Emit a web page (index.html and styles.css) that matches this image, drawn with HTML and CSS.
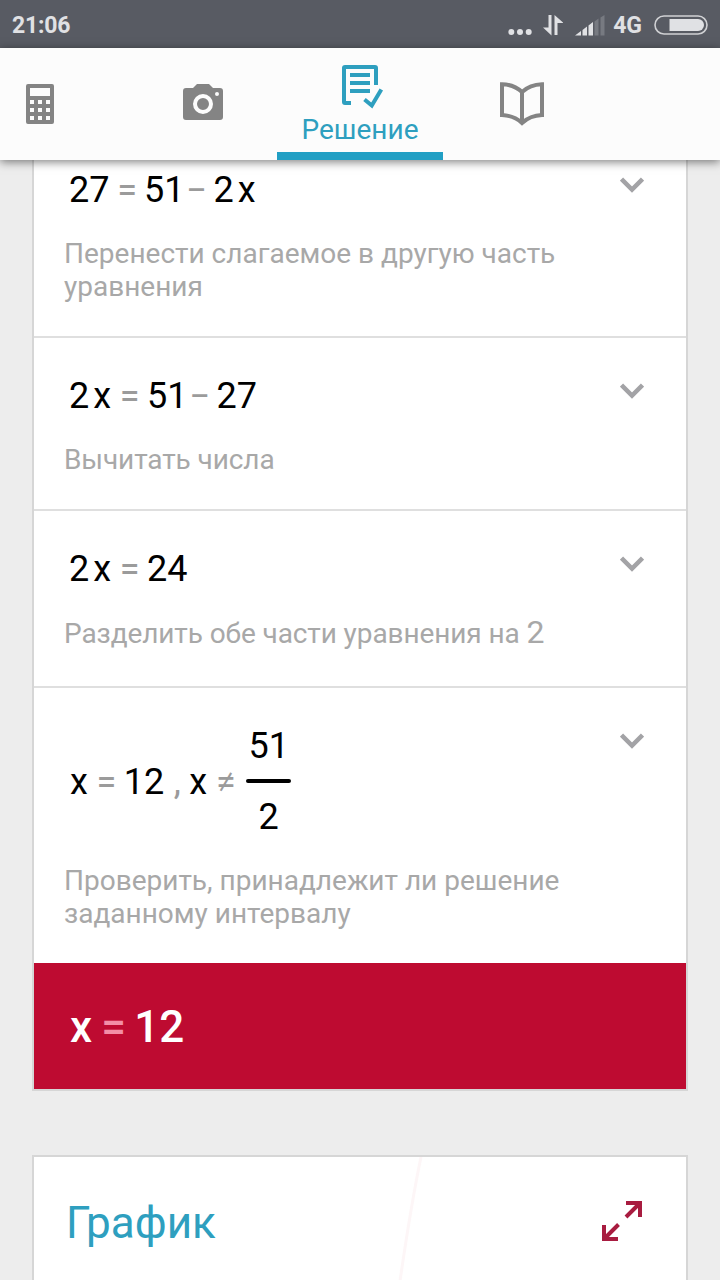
FILE: index.html
```html
<!DOCTYPE html>
<html lang="ru">
  <head>
    <meta charset="UTF-8" />
    <meta name="viewport" content="width=device-width, initial-scale=1.0" />
    <title>Решение</title>
    <link rel="stylesheet" href="styles.css">
  </head>

  <body>
    <!-- Status bar -->
    <div class="status-bar">
      <span class="status-time">21:06</span>
      <svg class="status-dots" width="24" height="22" viewBox="0 0 24 22">
        <circle cx="3.3" cy="18" r="3" />
        <circle cx="12" cy="18" r="3" />
        <circle cx="20.7" cy="18" r="3" />
      </svg>
      <svg class="status-data" width="20" height="22" viewBox="0 0 20 22">
        <path d="M5.500 1H8.500V21.500L0 13.500H5.500Z" />
        <path d="M11.500 21H14.500V9H20.500L11.500 1Z" />
      </svg>
      <svg class="status-signal" width="30" height="22" viewBox="0 0 30 22">
        <path d="M0 21.500L6 17V21.500Z" />
        <path d="M7.500 16L12 12.500V21.500H7.500Z" />
        <path d="M13.500 11.500L18 8V21.500H13.500Z" />
        <path class="weak" d="M19.500 7.500L23.500 4.500V21.500H19.500Z" />
        <path class="weak" d="M25.500 3.500L29.500 1V21.500H25.500Z" />
      </svg>
      <span class="status-net">4G</span>
      <svg class="status-battery" width="54" height="20" viewBox="0 0 54 20">
        <rect class="shell" x="1" y="1" width="52" height="18" rx="9" />
        <path d="M15.500 4H44a6 6 0 0 1 0 12H15.500Z" />
      </svg>
    </div>

    <!-- Tabs -->
    <div class="tabs">
      <div class="tab tab-calc">
        <svg width="28" height="40" viewBox="0 0 28 40">
          <path fill-rule="evenodd" d="M2 0H26a2 2 0 0 1 2 2V38a2 2 0 0 1-2 2H2a2 2 0 0 1-2-2V2a2 2 0 0 1 2-2ZM4 4V12H24V4ZM4 16V20H8V16ZM12 16V20H16V16ZM20 16V20H24V16ZM4 24V28H8V24ZM12 24V28H16V24ZM20 24V28H24V24ZM4 32V36H8V32ZM12 32V36H16V32ZM20 32V36H24V32Z" />
        </svg>
      </div>
      <div class="tab tab-camera">
        <svg width="40" height="36" viewBox="0 0 40 36">
          <path fill-rule="evenodd" d="M14 0H26L30 4H37a3 3 0 0 1 3 3V33a3 3 0 0 1-3 3H3a3 3 0 0 1-3-3V7a3 3 0 0 1 3-3H10ZM20 10a10 10 0 1 0 0 20a10 10 0 1 0 0-20ZM20 14a6 6 0 1 1 0 12a6 6 0 1 1 0-12ZM34 8a2 2 0 1 0 0 4a2 2 0 1 0 0-4Z" />
        </svg>
      </div>
      <div class="tab tab-active">
        <svg width="44" height="44" viewBox="0 0 44 44" class="outline">
          <path d="M13 40H7a1 1 0 0 1-1-1V5a1 1 0 0 1 1-1H37a1 1 0 0 1 1 1V22" />
          <path d="M12 12H32M12 20H32M12 28H32" />
          <path d="M26.500 36.500L33.800 42.500L43.300 26.500" />
        </svg>
        <span>Решение</span>
      </div>
      <div class="tab tab-book">
        <svg width="44" height="44" viewBox="0 0 44 44" class="outline">
          <path d="M2 2.200Q14 2.500 22 10Q30 2.500 42 2.200V33Q30 33.500 22 41Q14 33.500 2 33ZM22 10V41" />
        </svg>
      </div>
    </div>

    <!-- Steps of the solution -->
    <div class="content">
      <div class="card steps">
        <div class="step">
          <div class="math">
            <span>27</span><span class="op narrow">=</span><span>51</span><span class="op minus">–</span><span>2</span><span class="var">x</span>
          </div>
          <p>Перенести слагаемое в другую часть уравнения</p>
          <svg class="chevron" width="24" height="16" viewBox="0 0 24 16"><path d="M1.500 2L12 12.500L22.500 2" /></svg>
        </div>
        <div class="step">
          <div class="math">
            <span>2</span><span class="var">x</span><span class="op">=</span><span>51</span><span class="op minus">–</span><span>27</span>
          </div>
          <p class="tight">Вычитать числа</p>
          <svg class="chevron" width="24" height="16" viewBox="0 0 24 16"><path d="M1.500 2L12 12.500L22.500 2" /></svg>
        </div>
        <div class="step">
          <div class="math">
            <span>2</span><span class="var">x</span><span class="op">=</span><span>24</span>
          </div>
          <p class="tight with-number">Разделить обе части уравнения на <span class="number">2</span></p>
          <svg class="chevron" width="24" height="16" viewBox="0 0 24 16"><path d="M1.500 2L12 12.500L22.500 2" /></svg>
        </div>
        <div class="step last">
          <div class="math">
            <span>x</span><span class="op">=</span><span>12</span><span class="op comma">,</span><span>x</span><span class="op">≠</span>
            <div class="fraction">
              <span>51</span>
              <div class="fraction-bar"></div>
              <span>2</span>
            </div>
          </div>
          <p>Проверить, принадлежит ли решение заданному интервалу</p>
          <svg class="chevron" width="24" height="16" viewBox="0 0 24 16"><path d="M1.500 2L12 12.500L22.500 2" /></svg>
        </div>
        <div class="result">
          <span>x</span><span class="op">=</span><span>12</span>
        </div>
      </div>

      <!-- Graph -->
      <div class="card graph">
        <svg class="curve" width="30" height="124" viewBox="0 0 30 124"><path d="M25 0Q15 48 4 124" /></svg>
        <h2>График</h2>
        <svg class="expand" width="42" height="42" viewBox="0 0 42 42">
          <path d="M25 3H39V17M38 4L25 17M3 25V39H17M4 38L17.500 24.500" />
        </svg>
      </div>
    </div>
  </body>
</html>
```
FILE: styles.css
```css
* {
  box-sizing: border-box;
}

body {
  margin: 0;
  height: 1280px;
  overflow: hidden;
  display: flex;
  flex-direction: column;
  background-color: #ededed;
  font-family: Roboto, sans-serif;
}

svg {
  display: block;
}

/* Status bar */
.status-bar {
  height: 48px;
  padding: 1px 12px 0;
  display: flex;
  align-items: center;
  background-color: #585b63;
  color: #e0e1e4;
  fill: #e0e1e4;
  font-size: 23px;
  font-weight: bold;
}
.status-time {
  flex: 1;
  padding-top: 1px;
  letter-spacing: -0.2px;
}
.status-data {
  margin-left: 11px;
}
.status-signal {
  margin-left: 12px;
}
.status-signal .weak {
  fill: #777a81;
}
.status-net {
  margin-left: 8px;
  padding-top: 1px;
}
.status-battery {
  margin-left: 12px;
}
.status-battery .shell {
  fill: none;
  stroke: #d0d1d4;
  stroke-width: 1.6;
}

/* Tabs */
.tabs {
  position: relative;
  z-index: 2;
  height: 112px;
  display: grid;
  grid-template-columns: 129px 148px 166px 158px;
  background-color: #fcfcfc;
  fill: #848484;
  box-shadow: 0 2px 9px rgba(0, 0, 0, 0.5);
}
.tab {
  display: flex;
  flex-direction: column;
  align-items: center;
  justify-content: center;
}
.tab-calc {
  align-items: flex-start;
  padding-left: 26px;
}
.tab-camera {
  padding-bottom: 4px;
}
.tab-active {
  justify-content: flex-start;
  padding-top: 15px;
  border-bottom: 8px solid #219fc4;
  color: #2e9fbf;
  font-size: 28px;
  line-height: 33px;
}
.tab-active span {
  margin-top: 6px;
}
.outline {
  fill: none;
  stroke: #848484;
  stroke-width: 4;
  overflow: visible;
}
.tab-active .outline {
  stroke: #2e9fbf;
}

/* Cards */
.content {
  flex: 1;
  overflow: hidden;
  padding: 0 32px;
}
.card {
  border: 2px solid #d6d6d6;
  background-color: white;
}
.steps {
  margin-top: -30px;
}
.step {
  position: relative;
  padding: 37px 30px 33px;
  border-bottom: 2px solid #dfdfdf;
}
.step.last {
  border-bottom: none;
}
.step p {
  margin: 26px 0 0;
  width: 540px;
  color: #a8a8a8;
  font-size: 28px;
  line-height: 33px;
}
.step .tight {
  letter-spacing: -0.1px;
}
.step .with-number {
  height: 37px;
}
.number {
  font-size: 32px;
}
.math {
  display: flex;
  align-items: center;
  padding-left: 5px;
  color: black;
  font-size: 36px;
  line-height: 42px;
}
.last .math {
  padding-left: 6px;
}
.var {
  margin-left: 4px;
}
.op {
  width: 36px;
  padding-left: 1px;
  text-align: center;
  color: #9b9b9b;
}
.op.narrow {
  width: 34.5px;
}
.op.minus {
  width: 29px;
  padding: 0 5px 0 0;
  font-size: 30px;
  font-weight: 500;
}
.op.comma {
  width: 25px;
}
.fraction {
  width: 45px;
  margin-left: 3px;
  display: flex;
  flex-direction: column;
  align-items: center;
}
.fraction-bar {
  width: 45px;
  height: 4px;
  margin: 12px 0 13px;
  border-radius: 2px;
  background-color: black;
}
.chevron {
  position: absolute;
  top: 45px;
  right: 42px;
  fill: none;
  stroke: #a3a3a6;
  stroke-width: 4.5;
}

.result {
  height: 126px;
  padding: 2px 0 0 36px;
  display: flex;
  align-items: center;
  background-color: #be0b31;
  color: white;
  font-size: 44px;
  font-weight: 500;
}
.result .op {
  width: 42px;
  color: #f38ea6;
}

/* Graph */
.graph {
  position: relative;
  height: 200px;
  margin-top: 64px;
  padding: 40px 43px 0 32px;
  display: flex;
  justify-content: space-between;
}
.graph h2 {
  margin: 0;
  color: #2e9fbf;
  font-size: 44px;
  font-weight: normal;
  line-height: 52px;
}
.expand {
  margin-top: 3px;
  fill: none;
  stroke: #a81c40;
  stroke-width: 4;
}
.curve {
  position: absolute;
  top: 0;
  left: 362px;
  fill: none;
  stroke: #fdf6f7;
  stroke-width: 3;
}
```
